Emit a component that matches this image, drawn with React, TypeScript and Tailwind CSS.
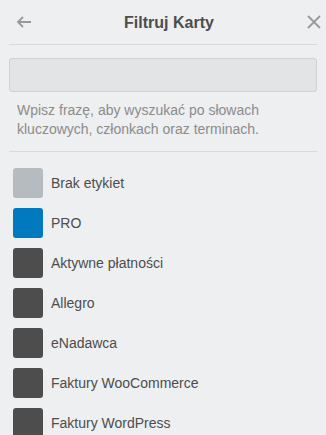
import React from 'react';

const labels: { name: string; color: string }[] = [
  { name: 'Brak etykiet', color: 'bg-[#b6bbbf]' },
  { name: 'PRO', color: 'bg-[#0079bf]' },
  { name: 'Aktywne płatności', color: 'bg-[#4d4d4d]' },
  { name: 'Allegro', color: 'bg-[#4d4d4d]' },
  { name: 'eNadawca', color: 'bg-[#4d4d4d]' },
  { name: 'Faktury WooCommerce', color: 'bg-[#4d4d4d]' },
  { name: 'Faktury WordPress', color: 'bg-[#4d4d4d]' },
];

export default function App() {
  return (
    <div
      className="w-[326px] h-[435px] overflow-hidden bg-[#edeff0] text-[#4d4d4d]"
      style={{ fontFamily: '"Liberation Sans", Arial, sans-serif' }}
    >
      <div className="relative h-[44px] flex items-center justify-center">
        <button className="absolute left-[14px] top-[13px] w-[20px] h-[18px] flex items-center justify-center text-[#999]">
          <svg width="16" height="12" viewBox="0 0 16 12" fill="none" stroke="currentColor" strokeWidth="1.8">
            <path d="M15 6H2M7 1L2 6l5 5" />
          </svg>
        </button>
        <h2 className="text-[16px] font-bold pl-[12px] pt-[1px]">Filtruj Karty</h2>
        <button className="absolute right-[4px] top-[14px] w-[16px] h-[16px] flex items-center justify-center text-[#999]">
          <svg width="14" height="14" viewBox="0 0 14 14" fill="none" stroke="currentColor" strokeWidth="1.8">
            <path d="M1 1l12 12M13 1L1 13" />
          </svg>
        </button>
      </div>
      <div className="mx-[9px] border-t border-[#d6dadc]" />
      <div className="px-[9px] pt-[13px]">
        <input
          className="block w-full h-[34px] rounded-[3px] border border-[#cdd2d4] bg-[#e2e4e6] outline-none"
        />
        <p className="mt-[9px] px-[8px] text-[14px] leading-[19px] text-[#8c8c8c]">
          Wpisz frazę, aby wyszukać po słowach kluczowych, członkach oraz terminach.
        </p>
      </div>
      <div className="mx-[9px] mt-[12px] border-t border-[#d6dadc]" />
      <ul className="pt-[16px] px-[13px] flex flex-col gap-[10px]">
        {labels.map(l => (
          <li key={l.name} className="flex items-center gap-[8px] h-[30px]">
            <span className={`w-[30px] h-[30px] rounded-[3px] shrink-0 ${l.color}`} />
            <span className="text-[14px]">{l.name}</span>
          </li>
        ))}
      </ul>
    </div>
  );
}
